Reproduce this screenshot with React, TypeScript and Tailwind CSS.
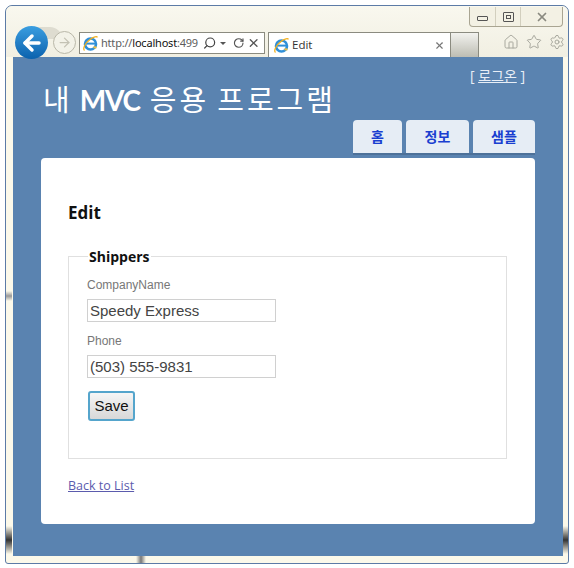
import React from 'react';
import { ArrowLeft, ArrowRight, Home, RotateCw, Search, Settings, Star, X } from 'lucide-react';

const IeIcon = () => (
    <svg width="17" height="17" viewBox="0 0 17 17" className="shrink-0">
        <circle cx="8.5" cy="9" r="5.5" fill="none" stroke="#2f8fd8" strokeWidth="2.6" />
        <path d="M3.5 8.6h10" stroke="#2f8fd8" strokeWidth="2" />
        <path d="M11.5 12.2l3 .4" stroke="#f0c040" strokeWidth="2" />
        <path d="M2.5 15.5C.5 14 3 8 8 4.5c3-2 6.500-3.500 7.500-2.200" fill="none" stroke="#f2b01e" strokeWidth="1.300" />
    </svg>
);

const App: React.FC = () => {
    return (
        <div className="w-[574px] h-[568px] bg-white pt-[5px] pl-[5px] pr-[5px] pb-[4px] font-['Open_Sans','Noto_Sans_CJK_KR',sans-serif]">
            <div className="relative h-full flex flex-col border border-[#5c7ba6] rounded-t-[7px] rounded-b-[3px] bg-[#fcf9ea] pl-[7px] pr-[5px] pb-[7px]">

                {/* Browser chrome */}
                <div className="relative h-[51px] shrink-0 -ml-[7px] -mr-[5px] pl-[7px] pr-[5px] rounded-t-[7px] bg-gradient-to-b from-[#f9f8ef] to-[#f1efe2]">
                    <div className="flex justify-end h-[21px] pt-[1px]">
                        <div className="flex w-[94px] h-[20px] border border-t-0 border-[#a9a592] rounded-b-[4px] bg-[#f3f1e4] text-[#555]">
                            <div className="w-[26px] flex items-center justify-center border-r border-[#d2cfbe]">
                                <div className="w-[11px] h-[5px] mt-[3px] border border-[#555] rounded-[1px]" />
                            </div>
                            <div className="w-[25px] flex items-center justify-center border-r border-[#d2cfbe]">
                                <div className="w-[11px] h-[10px] border border-[#555] rounded-[1px] flex items-center justify-center">
                                    <div className="w-[5px] h-[4px] border border-[#555]" />
                                </div>
                            </div>
                            <div className="flex-1 flex items-center justify-center">
                                <X size={14} strokeWidth={3} className="text-[#8a8a80]" />
                            </div>
                        </div>
                    </div>

                    <div className="flex items-start mt-[5px] h-[25px]">
                        <div className="w-[65px] shrink-0" />
                        <div className="w-[186px] h-[22px] shrink-0 ml-[1px] flex items-center pl-[2px] pr-[4px] bg-white border border-[#8b8b80] text-[11px] text-[#5d5d5d]">
                            <IeIcon />
                            <span className="ml-[2px] w-[99px] shrink-0 overflow-hidden whitespace-nowrap font-['Noto_Sans'] tracking-[-0.2px]">
                                http://<span className="text-[#111]">localhost</span>:499
                            </span>
                            <Search size={14} strokeWidth={2.2} className="ml-[3px] -scale-x-100 text-[#444]" />
                            <div className="ml-[4px] w-0 h-0 border-x-[3px] border-x-transparent border-t-[3px] border-t-[#555]" />
                            <RotateCw size={12} strokeWidth={2.4} className="ml-[7px] text-[#555]" />
                            <X size={14} strokeWidth={2.4} className="ml-[2px] text-[#555]" />
                        </div>
                        <div className="w-[183px] h-[25px] shrink-0 ml-[3px] flex items-center pl-[4px] pr-[5px] bg-white border border-b-0 border-[#8b8b80] text-[11.5px] text-[#333]">
                            <IeIcon />
                            <span className="ml-[2px] flex-1">Edit</span>
                            <X size={11} strokeWidth={2.5} className="text-[#777]" />
                        </div>
                        <div className="w-[28px] h-[25px] shrink-0 border-t border-r border-[#8b8b80] bg-gradient-to-b from-[#f2f2ee] to-[#bdbdb3]" />
                        <div className="flex items-center gap-[7px] ml-[24px] mt-[2px] text-[#a8a89e]">
                            <Home size={16} strokeWidth={1.5} />
                            <Star size={16} strokeWidth={1.5} />
                            <Settings size={16} strokeWidth={1.5} />
                        </div>
                    </div>

                    {/* Back and forward buttons sit over the toolbar */}
                    <div className="absolute left-[30px] top-[21px] w-[26px] h-[12px] rounded-tr-[12px] bg-[#dedcd0]" />
                    <div className="absolute left-[9px] top-[20px] w-[33px] h-[33px] rounded-full bg-gradient-to-b from-[#3a9ee0] to-[#0a62ae] flex items-center justify-center">
                        <ArrowLeft size={24} strokeWidth={3.5} className="text-white" />
                    </div>
                    <div className="absolute left-[47px] top-[25px] w-[23px] h-[23px] rounded-full border border-[#b9b7a8] bg-[#f3f2e8] flex items-center justify-center">
                        <ArrowRight size={15} strokeWidth={2} className="text-[#c4c2b4]" />
                    </div>
                </div>

                {/* Page */}
                <div className="flex-1 flex flex-col bg-[#5a83b0] pl-[28px] pr-[28px]">
                    <div className="flex justify-end h-[29px] pt-[9px] pr-[10px] text-[14px] leading-[19px] text-[#e8eef6]">
                        <span>[ <a className="underline">로그온</a> ]</span>
                    </div>
                    <h1 className="flex items-baseline h-[34px] ml-[2px] text-[29px] leading-[28px] font-normal text-white whitespace-nowrap">
                        <span>내</span>
                        <span className="ml-[10px] font-bold text-[28px] tracking-[-1.2px] font-['Lato']">MVC</span>
                        <span className="ml-[10px] tracking-[3px]">응용</span>
                        <span className="ml-[8px] tracking-[3px]">프로그램</span>
                    </h1>
                    <div className="flex justify-end gap-[4px] ml-auto h-[35px] border-b-[2px] border-[#4d7199] text-[14px] font-bold text-[#1a3fd0]">
                        <div className="w-[49px] flex items-center justify-center rounded-t-[4px] bg-[#e6edf5]">홈</div>
                        <div className="w-[63px] flex items-center justify-center rounded-t-[4px] bg-[#e6edf5]">정보</div>
                        <div className="w-[62px] flex items-center justify-center rounded-t-[4px] bg-[#e6edf5]">샘플</div>
                    </div>
                    <div className="h-[3px]" />

                    {/* Card */}
                    <div className="h-[366px] bg-white rounded-[4px] pl-[27px] pr-[28px] pt-[44px]">
                        <h2 className="text-[17px] leading-[22px] font-bold text-[#111]">Edit</h2>
                        <fieldset className="mt-[24px] h-[211px] border border-[#e0e0e0] pl-[18px] pr-[18px]">
                            <legend className="ml-[1px] px-[1px] text-[14px] leading-[17px] font-bold text-[#111]">Shippers</legend>
                            <div className="text-[12px] leading-[16px] text-[#777] font-['Liberation_Sans'] mt-[12px]">CompanyName</div>
                            <input
                                readOnly
                                value="Speedy Express"
                                className="block w-[189px] h-[23px] mt-[6px] px-[2px] border border-[#d0d0d0] text-[15px] text-[#444] font-['Liberation_Sans'] outline-none"
                            />
                            <div className="text-[12px] leading-[16px] text-[#777] font-['Liberation_Sans'] mt-[11px]">Phone</div>
                            <input
                                readOnly
                                value="(503) 555-9831"
                                className="block w-[189px] h-[23px] mt-[6px] px-[2px] border border-[#d0d0d0] text-[15px] text-[#444] font-['Liberation_Sans'] outline-none"
                            />
                            <button className="block w-[47px] h-[30px] ml-[1px] mt-[13px] border-2 border-[#55a5cc] rounded-[3px] bg-gradient-to-b from-[#f6f6f6] to-[#d8d8d8] text-[15px] text-[#111] font-['Liberation_Sans']">
                                Save
                            </button>
                        </fieldset>
                        <a className="block mt-[18px] text-[12.5px] leading-[18px] text-[#5b5bad] underline">Back to List</a>
                    </div>
                </div>

                {/* Smudges left in the window frame by the capture */}
                <div className="absolute left-0 top-[520px] w-[6px] h-[28px] bg-gradient-to-b from-transparent via-[#333] to-transparent" />
                <div className="absolute right-0 top-[520px] w-[5px] h-[28px] bg-gradient-to-b from-transparent via-[#333] to-transparent" />
                <div className="absolute left-0 top-[285px] w-[6px] h-[10px] bg-gradient-to-b from-transparent via-[#999] to-transparent" />
                <div className="absolute left-[130px] bottom-0 w-[10px] h-[7px] bg-gradient-to-r from-transparent via-[#777] to-transparent" />
            </div>
        </div>
    );
};

export default App;
